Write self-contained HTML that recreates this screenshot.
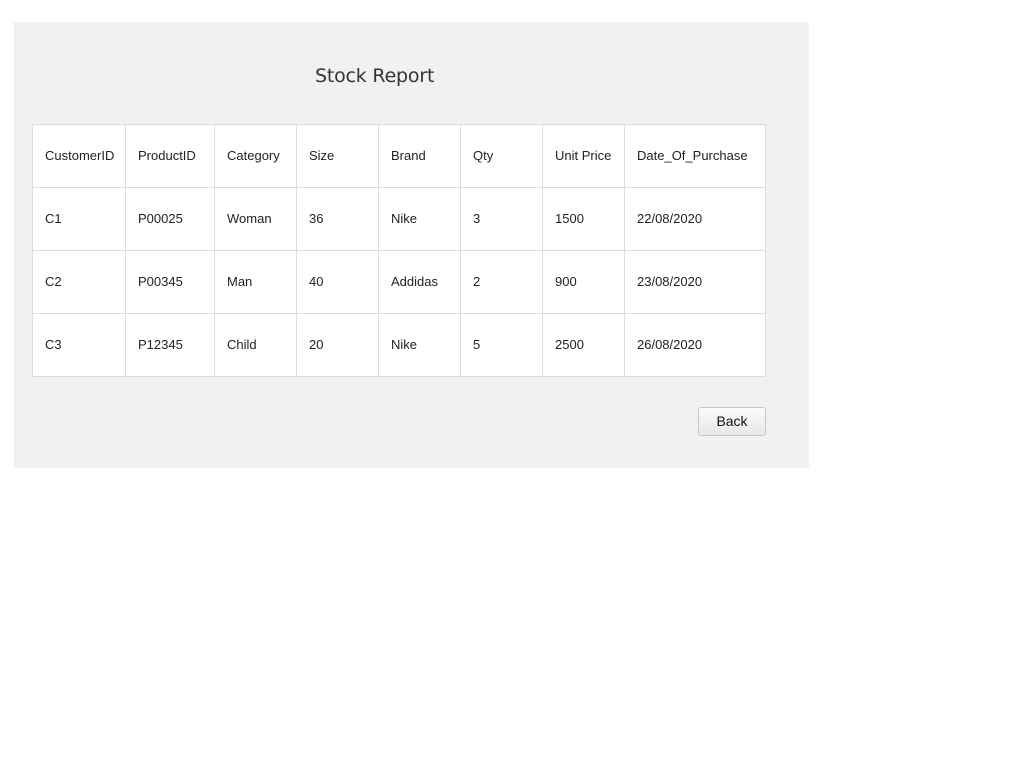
<!DOCTYPE html>
<html><head><style>
body{margin:0;background:#fff;font-family:"Liberation Sans",Arial,sans-serif;}
.panel{position:absolute;left:14px;top:22px;width:795px;height:446px;background:#f1f1f1;}
h1{position:absolute;left:315px;top:65px;margin:0;font-family:"DejaVu Sans",sans-serif;font-weight:normal;font-size:19px;color:#333;letter-spacing:-0.2px;}
table{position:absolute;left:32px;top:124px;border-collapse:collapse;background:#fff;font-size:13px;color:#222;}
td{border:1px solid #dcdcdc;height:62px;padding:0 0 2px 12px;box-sizing:border-box;vertical-align:middle;}
.btn{position:absolute;left:698px;top:407px;width:68px;height:29px;box-sizing:border-box;border:1px solid #c8c8c8;border-radius:3px;background:linear-gradient(#fafafa,#e8e8e8);font-size:14px;text-align:center;line-height:27px;color:#111;}
</style></head><body>
<div class="panel"></div>
<h1>Stock Report</h1>
<table>
<colgroup><col style="width:93px"><col style="width:89px"><col style="width:82px"><col style="width:82px"><col style="width:82px"><col style="width:82px"><col style="width:82px"><col style="width:141px"></colgroup>
<tr style="height:63px"><td>CustomerID</td><td>ProductID</td><td>Category</td><td>Size</td><td>Brand</td><td>Qty</td><td>Unit Price</td><td>Date_Of_Purchase</td></tr>
<tr style="height:63px"><td>C1</td><td>P00025</td><td>Woman</td><td>36</td><td>Nike</td><td>3</td><td>1500</td><td>22/08/2020</td></tr>
<tr style="height:63px"><td>C2</td><td>P00345</td><td>Man</td><td>40</td><td>Addidas</td><td>2</td><td>900</td><td>23/08/2020</td></tr>
<tr style="height:63px"><td>C3</td><td>P12345</td><td>Child</td><td>20</td><td>Nike</td><td>5</td><td>2500</td><td>26/08/2020</td></tr>
</table>
<div class="btn">Back</div>
</body></html>
